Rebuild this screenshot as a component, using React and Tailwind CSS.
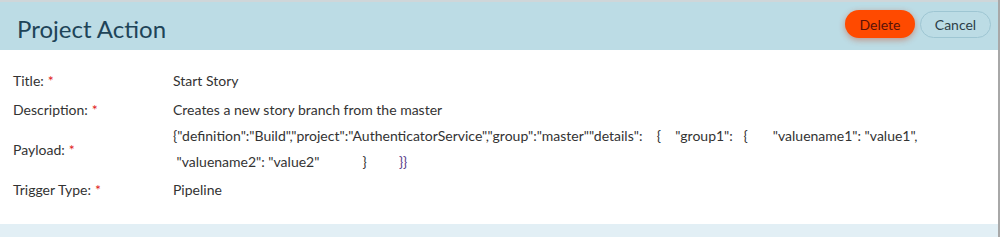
export default function App() {
  const font = { fontFamily: 'Lato, "Noto Sans", sans-serif' };
  const Label = ({ children }) => (
    <div className="w-[160px] shrink-0 text-[#333]">
      {children}
      <span className="text-[#e0201b] ml-[4px]">*</span>
    </div>
  );
  return (
    <div className="w-[1000px] h-[237px] overflow-hidden bg-white flex flex-col border-r-2 border-[#a8a8a8]" style={font}>
      <div className="h-[50px] shrink-0 bg-[#bcdce5] border-t-2 border-[#cfd6d9] flex items-center justify-between pl-[17px] pr-[7px]">
        <div className="text-[24px] text-[#1e4458] leading-none mt-[5px]">Project Action</div>
        <div className="flex items-center gap-[5px] -mt-[4px]">
          <button className="w-[70px] h-[28px] rounded-full bg-[#ff4a00] text-[#5a1208] text-[14px] shadow-[0_2px_6px_rgba(200,60,20,0.45)]">
            Delete
          </button>
          <button className="w-[71px] h-[27px] rounded-full border border-[#9ec6d3] text-[#2d3e48] text-[14px] bg-transparent">
            Cancel
          </button>
        </div>
      </div>
      <div className="flex-1 flex flex-col pl-[13px] pt-[16px] text-[14px]">
        <div className="flex items-center h-[29px]">
          <Label>Title:</Label>
          <div className="text-[#333]">Start Story</div>
        </div>
        <div className="flex items-center h-[28px]">
          <Label>Description:</Label>
          <div className="text-[#333]">Creates a new story branch from the master</div>
        </div>
        <div className="flex items-center h-[52px]">
          <Label>Payload:</Label>
          <div className="text-[#333] leading-[26px] whitespace-pre">
            <div>{'{"definition":"Build","project":"AuthenticatorService","group":"master""details":    {    "group1":   {       "valuename1": "value1",'}</div>
            <div>
              {' "valuename2": "value2"            }         '}
              <span className="text-[#5a3d8a]">{'}}'}</span>
            </div>
          </div>
        </div>
        <div className="flex items-center h-[28px]">
          <Label>Trigger Type:</Label>
          <div className="text-[#333]">Pipeline</div>
        </div>
      </div>
      <div className="h-[13px] shrink-0 bg-[#e2eff5]"></div>
    </div>
  );
}
